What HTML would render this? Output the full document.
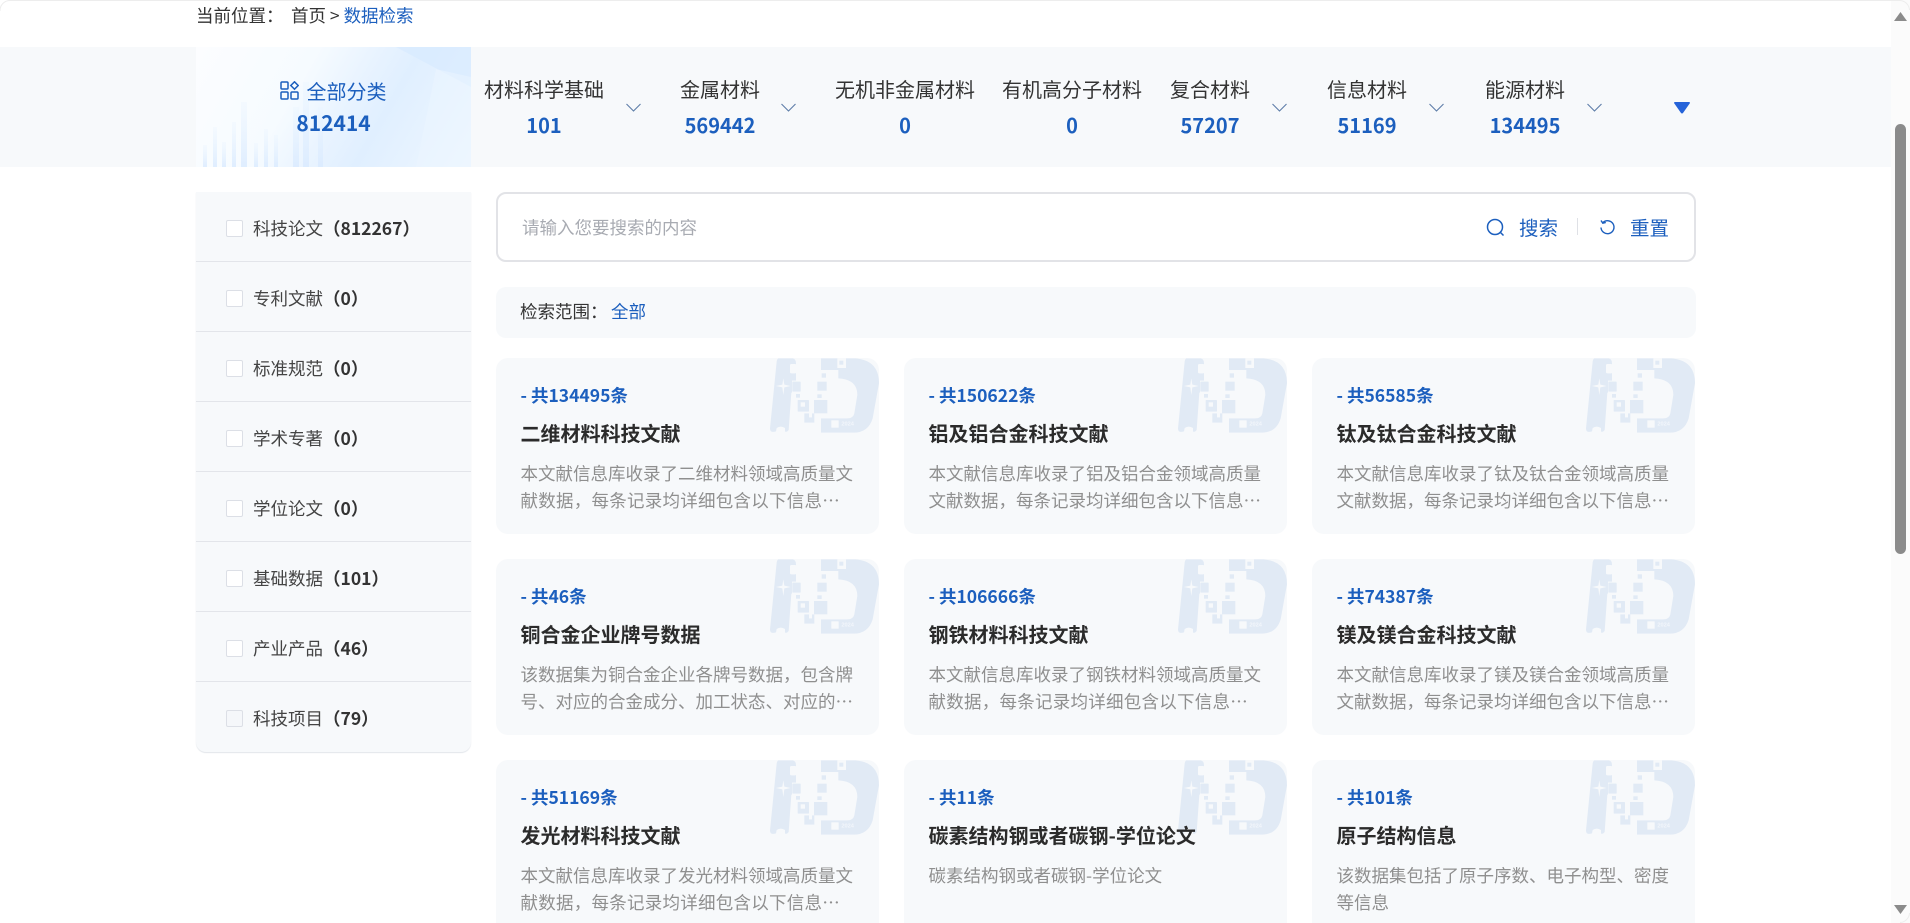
<!DOCTYPE html>
<html lang="zh-CN">
<head>
<meta charset="utf-8">
<title>数据检索</title>
<style>
*{box-sizing:border-box;margin:0;padding:0}
html,body{width:1910px;height:923px;overflow:hidden;background:#fff}
body{position:relative;font-family:"Noto Sans CJK SC","Liberation Sans",sans-serif;color:#333;font-size:17.5px}
.a{position:absolute;white-space:nowrap;line-height:26px}
.blue{color:#1c5fbe}
.band{position:absolute;left:0;top:47px;width:1891px;height:120px;background:#f7f9fb}
.all{position:absolute;left:196px;top:47px;width:275px;height:120px;overflow:hidden;background:linear-gradient(120deg,#fcfdff 0%,#f6fbff 36%,#e8f3ff 54%,#e0efff 66%,#eff7ff 100%)}
.cat{position:absolute;top:76px;transform:translateX(-50%);font-size:20px;line-height:26px;white-space:nowrap;color:#333}
.num{position:absolute;top:111px;transform:translateX(-50%);font-size:20px;line-height:28px;font-weight:700;color:#1c5fbe;white-space:nowrap}
.chev{position:absolute;top:103px}
.side{position:absolute;left:196px;top:192px;width:275px;height:560px;background:#f7f9fb;border-radius:0 0 10px 10px;box-shadow:0 1px 1px #e2e5ea}
.row{position:absolute;left:0;width:275px;height:70px;border-bottom:1px solid #e3e5ea}
.row:last-child{border-bottom:0}
.cb{position:absolute;left:30px;top:28px;width:17px;height:17px;background:#fff;border:1px solid #dcdfe6;border-radius:2px}
.rt{position:absolute;left:57px;top:24px;line-height:26px;white-space:nowrap;color:#444}
.rt b{font-weight:700;color:#333}
.search{position:absolute;left:496px;top:192px;width:1200px;height:70px;border:2px solid #e2e3e7;border-radius:10px;background:#fff}
.range{position:absolute;left:496px;top:287px;width:1200px;height:51px;background:#f7f9fb;border-radius:10px}
.card{position:absolute;width:383px;height:176px;background:#f7f9fb;border-radius:12px;overflow:hidden}
.card svg{position:absolute;left:264px;top:-8px}
.c{position:absolute;left:24.5px;top:25px;font-size:17.5px;line-height:26px;font-weight:700;color:#1c5fbe;white-space:nowrap}
.t{position:absolute;left:24.5px;top:60px;font-size:20px;line-height:30px;font-weight:600;color:#2b2b2b;white-space:nowrap}
.d{position:absolute;left:24.5px;top:103px;font-size:17.5px;line-height:26.6px;color:#8f8f8f;white-space:nowrap}
.k{letter-spacing:.25px}
.sb{position:absolute;left:1891px;top:0;width:19px;height:923px;background:#fbfbfb}
.th{position:absolute;left:4px;top:124px;width:11px;height:430px;background:#8b8b8b;border-radius:6px}
</style>
</head>
<body>

<svg width="0" height="0" style="position:absolute">
<defs>
<linearGradient id="bar" x1="0" y1="0" x2="0" y2="1"><stop offset="0" stop-color="#e6f2ff" stop-opacity=".25"/><stop offset="1" stop-color="#d9eaff" stop-opacity=".8"/></linearGradient>
<symbol id="logo" viewBox="0 0 140 100">
<g transform="scale(.3333)">
<path fill="#e1eaf5" d="M55 25H98Q108 27 108 40V92H96V128H94L86 240Q80 248 75 244V234Q62 226 50 234L48 244Q30 250 30 235L50 35Q51 27 55 25Z"/>
<rect x="90" y="42" width="19" height="28" rx="4" fill="#f7f9fb"/>
<rect x="97" y="95" width="25" height="30" rx="2" fill="#e1eaf5"/>
<rect x="108" y="132" width="12" height="11" fill="#e1eaf5"/>
<path fill="#f7f9fb" d="M70 85 73 104 92 108 73 112 70 135 67 112 48 108 67 104Z"/>
<rect x="113" y="150" width="34" height="35" rx="2" fill="#e1eaf5"/>
<rect x="122" y="157" width="13" height="13" fill="#f7f9fb"/>
<path fill="#e1eaf5" d="M133 190H147V202H156V190H163V218H133Z"/>
<rect x="172" y="95" width="28" height="27" fill="#e1eaf5"/>
<rect x="172" y="133" width="13" height="11" fill="#e1eaf5"/>
<rect x="162" y="150" width="40" height="40" fill="#e1eaf5"/>
<rect x="185" y="70" width="13" height="13" fill="#e1eaf5"/>
<path fill="#e1eaf5" d="M183 25H232V54H258V25H285Q357 30 357 100L338 205Q325 248 280 248H183V205H262Q280 205 283 190L292 135Q292 88 235 85V60H183Z"/>
<rect x="238" y="32" width="12" height="12" fill="#e1eaf5"/>
<rect x="214" y="211" width="22" height="22" fill="#f7f9fb"/>
<text x="244" y="227" font-family="Liberation Sans,sans-serif" font-size="17" font-weight="700" fill="#f2f6fb">2024</text>
</g>
</symbol>
</defs>
</svg>

<div class="a" style="left:196px;top:3px">当前位置：</div>
<div class="a" style="left:291px;top:3px">首页 &gt; <span class="blue">数据检索</span></div>

<div class="band"></div>
<div class="all">
<svg width="275" height="120" style="position:absolute;left:0;top:0">
<path d="M200 0H275V40Z" fill="#d5e9ff" opacity=".6"/>
<path d="M240 22 275 30 275 120 220 120Z" fill="#ecf6ff" opacity=".5"/>
<g fill="url(#bar)">
<rect x="7" y="98" width="4" height="22"/><rect x="17" y="80" width="4" height="40"/><rect x="26" y="95" width="4" height="25"/><rect x="36" y="75" width="4" height="45"/>
<rect x="45" y="55" width="6" height="65"/><rect x="58" y="96" width="4" height="24"/><rect x="68" y="82" width="4" height="38"/><rect x="78" y="88" width="4" height="32"/>
<rect x="97" y="60" width="6" height="60"/><rect x="107" y="35" width="6" height="85"/><rect x="122" y="60" width="5" height="60"/>
</g>
</svg>
</div>
<svg style="position:absolute;left:280px;top:81px" width="19" height="19" viewBox="0 0 19 19" fill="none" stroke="#1c5fbe" stroke-width="1.5">
<rect x="1" y="1" width="7" height="7" rx="1"/><rect x="1" y="11" width="7" height="7" rx="1"/><rect x="11" y="11" width="7" height="7" rx="1"/><path d="M14.5 .8 18.2 4.5 14.5 8.2 10.8 4.5Z"/>
</svg>
<div class="a blue" style="left:306.5px;top:78px;font-size:20px">全部分类</div>
<div class="a blue" style="left:333.5px;top:109px;font-size:21px;line-height:28px;font-weight:700;transform:translateX(-50%)">812414</div>

<div class="cat" style="left:544px">材料科学基础</div><div class="num" style="left:544px">101</div>
<div class="cat" style="left:720px">金属材料</div><div class="num" style="left:720px">569442</div>
<div class="cat" style="left:905px">无机非金属材料</div><div class="num" style="left:905px">0</div>
<div class="cat" style="left:1072px">有机高分子材料</div><div class="num" style="left:1072px">0</div>
<div class="cat" style="left:1210px">复合材料</div><div class="num" style="left:1210px">57207</div>
<div class="cat" style="left:1367px">信息材料</div><div class="num" style="left:1367px">51169</div>
<div class="cat" style="left:1525px">能源材料</div><div class="num" style="left:1525px">134495</div>

<svg class="chev" style="left:626px" width="15" height="9" viewBox="0 0 15 9" fill="none" stroke="#5d7da8" stroke-width="1.1"><path d="M.5 1 7.5 8 14.5 1"/></svg>
<svg class="chev" style="left:781px" width="15" height="9" viewBox="0 0 15 9" fill="none" stroke="#5d7da8" stroke-width="1.1"><path d="M.5 1 7.5 8 14.5 1"/></svg>
<svg class="chev" style="left:1272px" width="15" height="9" viewBox="0 0 15 9" fill="none" stroke="#5d7da8" stroke-width="1.1"><path d="M.5 1 7.5 8 14.5 1"/></svg>
<svg class="chev" style="left:1429px" width="15" height="9" viewBox="0 0 15 9" fill="none" stroke="#5d7da8" stroke-width="1.1"><path d="M.5 1 7.5 8 14.5 1"/></svg>
<svg class="chev" style="left:1587px" width="15" height="9" viewBox="0 0 15 9" fill="none" stroke="#5d7da8" stroke-width="1.1"><path d="M.5 1 7.5 8 14.5 1"/></svg>
<svg style="position:absolute;left:1674px;top:102px" width="16" height="12" viewBox="0 0 16 12"><path d="M0 1Q0 0 1 0H15Q16 0 16 1L9 11Q8 12 7 11Z" fill="#2563d9"/></svg>

<div class="side">
<div class="row" style="top:0"><span class="cb"></span><span class="rt">科技论文<b>（812267）</b></span></div>
<div class="row" style="top:70px"><span class="cb"></span><span class="rt">专利文献<b>（0）</b></span></div>
<div class="row" style="top:140px"><span class="cb"></span><span class="rt">标准规范<b>（0）</b></span></div>
<div class="row" style="top:210px"><span class="cb"></span><span class="rt">学术专著<b>（0）</b></span></div>
<div class="row" style="top:280px"><span class="cb"></span><span class="rt">学位论文<b>（0）</b></span></div>
<div class="row" style="top:350px"><span class="cb"></span><span class="rt">基础数据<b>（101）</b></span></div>
<div class="row" style="top:420px"><span class="cb"></span><span class="rt">产业产品<b>（46）</b></span></div>
<div class="row" style="top:490px"><span class="cb" style="background:#f5f7fa"></span><span class="rt">科技项目<b>（79）</b></span></div>
</div>

<div class="search"></div>
<div class="a" style="left:522px;top:215px;color:#a8abb2">请输入您要搜索的内容</div>
<svg style="position:absolute;left:1486px;top:218px" width="19" height="19" viewBox="0 0 19 19" fill="none" stroke="#1c5fbe" stroke-width="1.5"><circle cx="9" cy="9" r="7.5"/><path d="M14.5 14.5 17.5 17.5"/></svg>
<div class="a blue" style="left:1519px;top:214px;font-size:19.5px">搜索</div>
<div style="position:absolute;left:1577px;top:218px;width:1px;height:17px;background:#dfe1e6"></div>
<svg style="position:absolute;left:1599px;top:219px" width="17" height="17" viewBox="0 0 17 17" fill="none" stroke="#1c5fbe" stroke-width="1.4"><path d="M4 3.5A6.5 6.5 0 1 1 2 8.5"/><path d="M2 1.5 3.8 4.2 6.8 3.4"/></svg>
<div class="a blue" style="left:1630px;top:214px;font-size:19.5px">重置</div>

<div class="range"></div>
<div class="a" style="left:520px;top:299px">检索范围：</div>
<div class="a blue" style="left:611px;top:299px">全部</div>

<div class="card" style="left:496px;top:358px"><svg width="140" height="100"><use href="#logo"/></svg><div class="c">- 共134495条</div><div class="t">二维材料科技文献</div><div class="d">本文献信息库收录了二维材料领域高质量文<br><span class="k">献数据，每条记录均详细包含以下信息…</span></div></div>
<div class="card" style="left:904px;top:358px"><svg width="140" height="100"><use href="#logo"/></svg><div class="c">- 共150622条</div><div class="t">铝及铝合金科技文献</div><div class="d">本文献信息库收录了铝及铝合金领域高质量<br>文献数据，每条记录均详细包含以下信息…</div></div>
<div class="card" style="left:1312px;top:358px"><svg width="140" height="100"><use href="#logo"/></svg><div class="c">- 共56585条</div><div class="t">钛及钛合金科技文献</div><div class="d">本文献信息库收录了钛及钛合金领域高质量<br>文献数据，每条记录均详细包含以下信息…</div></div>

<div class="card" style="left:496px;top:559px"><svg width="140" height="100"><use href="#logo"/></svg><div class="c">- 共46条</div><div class="t">铜合金企业牌号数据</div><div class="d">该数据集为铜合金企业各牌号数据，包含牌<br>号、对应的合金成分、加工状态、对应的…</div></div>
<div class="card" style="left:904px;top:559px"><svg width="140" height="100"><use href="#logo"/></svg><div class="c">- 共106666条</div><div class="t">钢铁材料科技文献</div><div class="d">本文献信息库收录了钢铁材料领域高质量文<br><span class="k">献数据，每条记录均详细包含以下信息…</span></div></div>
<div class="card" style="left:1312px;top:559px"><svg width="140" height="100"><use href="#logo"/></svg><div class="c">- 共74387条</div><div class="t">镁及镁合金科技文献</div><div class="d">本文献信息库收录了镁及镁合金领域高质量<br>文献数据，每条记录均详细包含以下信息…</div></div>

<div class="card" style="left:496px;top:760px"><svg width="140" height="100"><use href="#logo"/></svg><div class="c">- 共51169条</div><div class="t">发光材料科技文献</div><div class="d">本文献信息库收录了发光材料领域高质量文<br><span class="k">献数据，每条记录均详细包含以下信息…</span></div></div>
<div class="card" style="left:904px;top:760px"><svg width="140" height="100"><use href="#logo"/></svg><div class="c">- 共11条</div><div class="t">碳素结构钢或者碳钢-学位论文</div><div class="d">碳素结构钢或者碳钢-学位论文</div></div>
<div class="card" style="left:1312px;top:760px"><svg width="140" height="100"><use href="#logo"/></svg><div class="c">- 共101条</div><div class="t">原子结构信息</div><div class="d">该数据集包括了原子序数、电子构型、密度<br>等信息</div></div>

<div class="sb">
<div class="th"></div>
<svg style="position:absolute;left:3px;top:12px" width="13" height="9" viewBox="0 0 13 9"><path d="M6.5 0 13 9H0Z" fill="#8b8b8b"/></svg>
<svg style="position:absolute;left:3px;top:905px" width="13" height="9" viewBox="0 0 13 9"><path d="M0 0H13L6.5 9Z" fill="#8b8b8b"/></svg>
</div>

<svg style="position:absolute;left:0;top:0;pointer-events:none" width="1910" height="923" viewBox="0 0 1910 923" fill="none">
<path d="M0 11V10A10 10 0 0 1 10 .5H1900A10 10 0 0 1 1909.5 10" stroke="#ededed" stroke-width="1"/>
<path d="M1909.5 913A10 10 0 0 1 1900 922.5" stroke="#ededed" stroke-width="1"/>
</svg>

</body>
</html>
